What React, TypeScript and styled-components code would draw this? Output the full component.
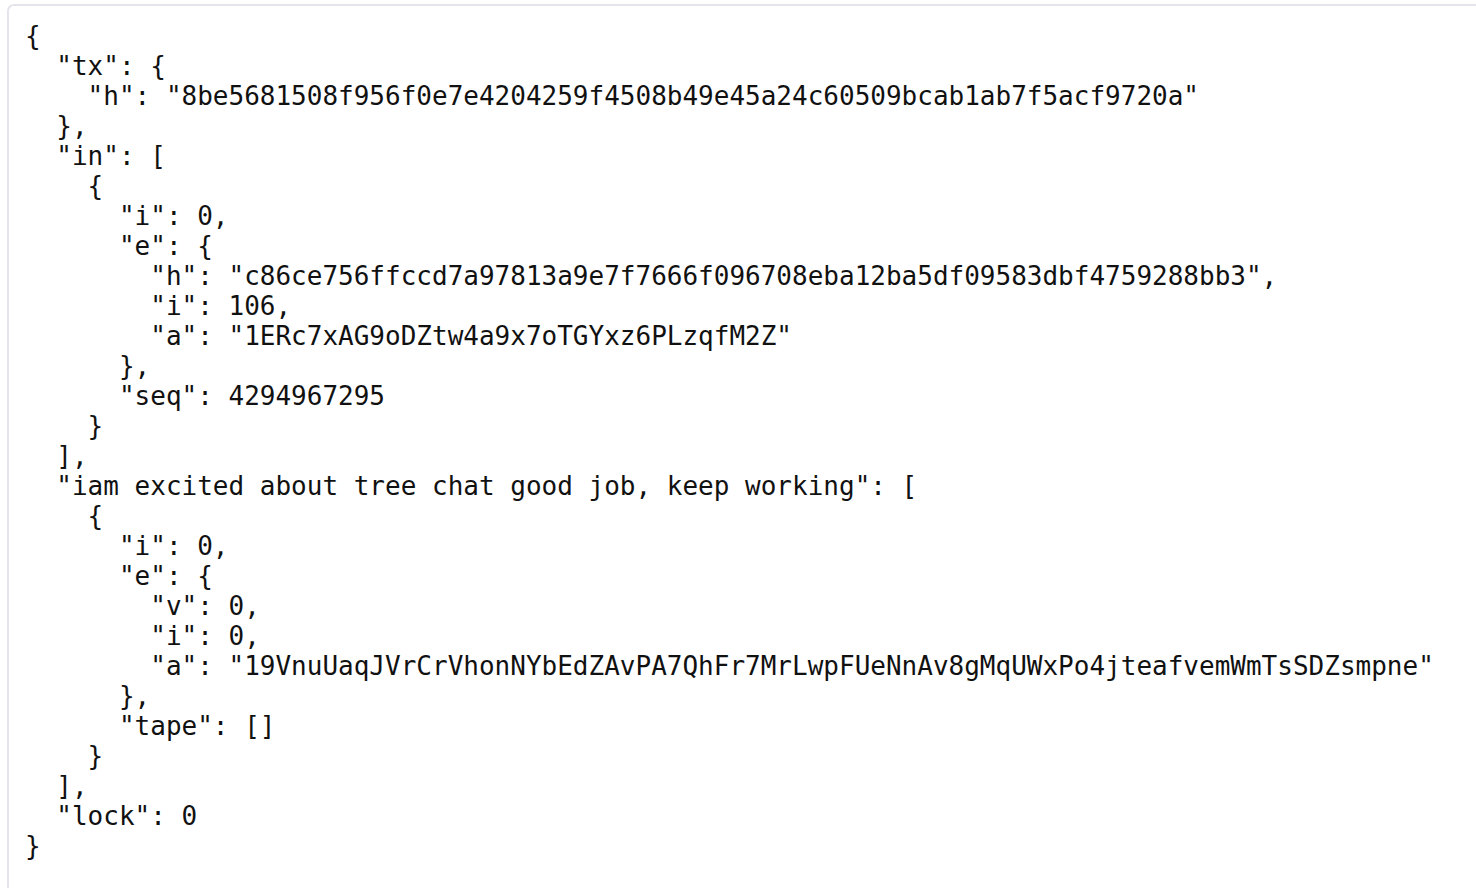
import React from "react";
import styled, { createGlobalStyle } from "styled-components";

const Global = createGlobalStyle`
  html, body { margin: 0; padding: 0; background: #ffffff; overflow: hidden; }
  #root { width: 1476px; height: 888px; overflow: hidden; }
`;

const Page = styled.div`
  padding: 4px 0 0 7px;
  box-sizing: border-box;
  width: 1476px;
  height: 888px;
`;

const CodeBlock = styled.pre`
  margin: 0;
  width: 1500px;
  min-height: 920px;
  box-sizing: border-box;
  border: 2px solid #e3e5ea;
  border-radius: 7px;
  padding: 15px 16px;
  font-family: "DejaVu Sans Mono", "Liberation Mono", monospace;
  font-size: 26px;
  line-height: 30px;
  color: #111111;
  white-space: pre;
`;

const data = {
  tx: { h: "8be5681508f956f0e7e4204259f4508b49e45a24c60509bcab1ab7f5acf9720a" },
  in: [
    {
      i: 0,
      e: {
        h: "c86ce756ffccd7a97813a9e7f7666f096708eba12ba5df09583dbf4759288bb3",
        i: 106,
        a: "1ERc7xAG9oDZtw4a9x7oTGYxz6PLzqfM2Z",
      },
      seq: 4294967295,
    },
  ],
  "iam excited about tree chat good job, keep working": [
    {
      i: 0,
      e: {
        v: 0,
        i: 0,
        a: "19VnuUaqJVrCrVhonNYbEdZAvPA7QhFr7MrLwpFUeNnAv8gMqUWxPo4jteafvemWmTsSDZsmpne",
      },
      tape: [],
    },
  ],
  lock: 0,
};

export default function App() {
  return (
    <>
      <Global />
      <Page>
        <CodeBlock>{JSON.stringify(data, null, 2)}</CodeBlock>
      </Page>
    </>
  );
}
